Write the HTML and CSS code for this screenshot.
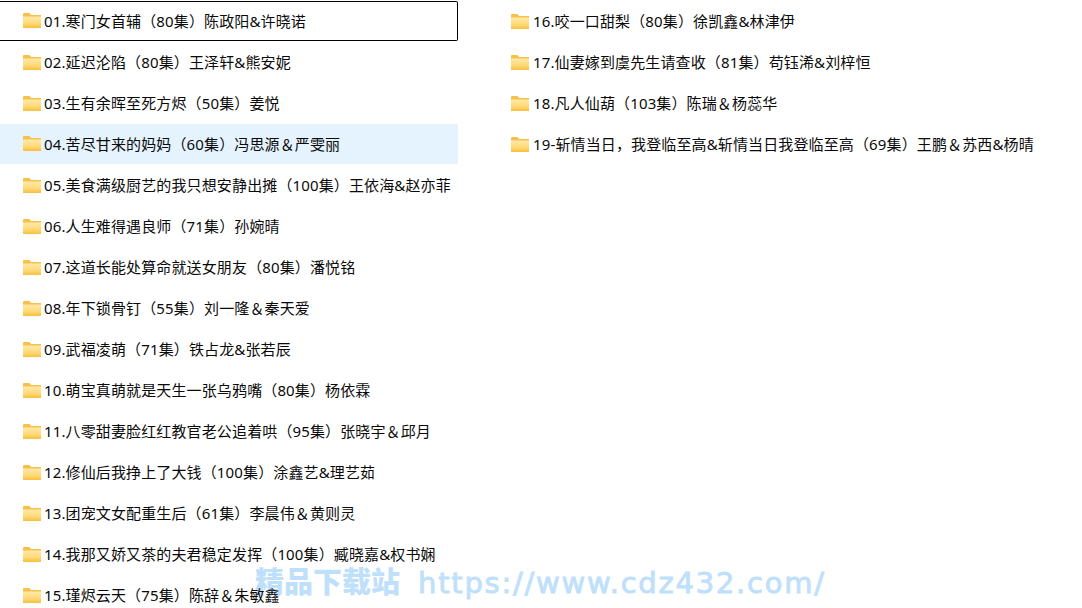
FILE: index.html
```html
<!DOCTYPE html>
<html lang="zh-CN">

<head>
    <meta charset="UTF-8">
    <meta name="viewport" content="width=device-width, initial-scale=1.0">
    <title>文件列表</title>
    <link rel="stylesheet" href="styles.css">
</head>

<body>
    <svg class="defs" width="0" height="0">
        <defs>
            <linearGradient id="folderFill" x1="0" y1="0" x2="0" y2="1">
                <stop offset="0" stop-color="#ffe9a8" />
                <stop offset="0.6" stop-color="#ffd977" />
                <stop offset="1" stop-color="#f9bf3c" />
            </linearGradient>
            <symbol id="folder" viewBox="0 0 18 15">
                <path d="M0 1.2C0 .5.5 0 1.2 0h4.6c.5 0 .9.2 1.2.6L8.2 2H18v12.4c0 .3-.3.6-.6.6H.6c-.3 0-.6-.3-.6-.6z" fill="#f7c04a" />
                <path d="M0 3.6h18V14.4c0 .3-.3.6-.6.6H.6c-.3 0-.6-.3-.6-.6z" fill="url(#folderFill)" />
            </symbol>
        </defs>
    </svg>

    <div class="list">
        <div class="column">
            <div class="item focused"><svg class="folder"><use href="#folder"></use></svg><span>01.寒门女首辅（80集）陈政阳&amp;许晓诺</span></div>
            <div class="item"><svg class="folder"><use href="#folder"></use></svg><span>02.延迟沦陷（80集）王泽轩&amp;熊安妮</span></div>
            <div class="item"><svg class="folder"><use href="#folder"></use></svg><span>03.生有余晖至死方烬（50集）姜悦</span></div>
            <div class="item hover"><svg class="folder"><use href="#folder"></use></svg><span>04.苦尽甘来的妈妈（60集）冯思源＆严雯丽</span></div>
            <div class="item"><svg class="folder"><use href="#folder"></use></svg><span>05.美食满级厨艺的我只想安静出摊（100集）王依海&amp;赵亦菲</span></div>
            <div class="item"><svg class="folder"><use href="#folder"></use></svg><span>06.人生难得遇良师（71集）孙婉晴</span></div>
            <div class="item"><svg class="folder"><use href="#folder"></use></svg><span>07.这道长能处算命就送女朋友（80集）潘悦铭</span></div>
            <div class="item"><svg class="folder"><use href="#folder"></use></svg><span>08.年下锁骨钉（55集）刘一隆＆秦天爱</span></div>
            <div class="item"><svg class="folder"><use href="#folder"></use></svg><span>09.武福凌萌（71集）铁占龙&amp;张若辰</span></div>
            <div class="item"><svg class="folder"><use href="#folder"></use></svg><span>10.萌宝真萌就是天生一张乌鸦嘴（80集）杨依霖</span></div>
            <div class="item"><svg class="folder"><use href="#folder"></use></svg><span>11.八零甜妻脸红红教官老公追着哄（95集）张晓宇＆邱月</span></div>
            <div class="item"><svg class="folder"><use href="#folder"></use></svg><span>12.修仙后我挣上了大钱（100集）涂鑫艺&amp;理艺茹</span></div>
            <div class="item"><svg class="folder"><use href="#folder"></use></svg><span>13.团宠文女配重生后（61集）李晨伟＆黄则灵</span></div>
            <div class="item"><svg class="folder"><use href="#folder"></use></svg><span>14.我那又娇又茶的夫君稳定发挥（100集）臧晓嘉&amp;权书娴</span></div>
            <div class="item"><svg class="folder"><use href="#folder"></use></svg><span>15.瑾烬云天（75集）陈辞＆朱敏鑫</span></div>
        </div>
        <div class="column column-right">
            <div class="item"><svg class="folder"><use href="#folder"></use></svg><span>16.咬一口甜梨（80集）徐凯鑫&amp;林津伊</span></div>
            <div class="item"><svg class="folder"><use href="#folder"></use></svg><span>17.仙妻嫁到虞先生请查收（81集）苟钰浠&amp;刘梓恒</span></div>
            <div class="item"><svg class="folder"><use href="#folder"></use></svg><span>18.凡人仙葫（103集）陈瑞＆杨蕊华</span></div>
            <div class="item"><svg class="folder"><use href="#folder"></use></svg><span>19-斩情当日，我登临至高&amp;斩情当日我登临至高（69集）王鹏＆苏西&amp;杨晴</span></div>
        </div>
    </div>

    <div class="watermark"><span class="wm-cn">精品下载站</span><span class="wm-url">https://www.cdz432.com/</span></div>
</body>

</html>
```

FILE: styles.css
```css
html,
body {
    margin: 0;
    height: 608px;
    overflow: hidden;
    background-color: #fff;
}

body {
    font-family: "Noto Sans", "Noto Sans CJK SC", sans-serif;
    font-size: 15px;
    letter-spacing: 0.13px;
    color: #0a0a0a;
}

.defs {
    position: absolute;
}

.list {
    position: relative;
    z-index: 1;
    display: flex;
    gap: 30px;
    padding-top: 1px;
}

.column {
    width: 458px;
    flex: none;
}

.column-right {
    width: 580px;
}

.item {
    display: flex;
    align-items: center;
    box-sizing: border-box;
    height: 41px;
    padding-left: 23px;
    white-space: nowrap;
}

.item span {
    position: relative;
    top: -1px;
}

.column-right .folder {
    margin-right: 4px;
}

.item.focused {
    height: 40px;
    margin-bottom: 1px;
    border: 1px solid #000;
    border-left: none;
    border-radius: 0 2px 2px 0;
}

.item.hover {
    height: 40px;
    margin-bottom: 1px;
    background-color: #e5f3ff;
    border-radius: 0 2px 2px 0;
}

.folder {
    width: 18px;
    height: 15px;
    margin-right: 3px;
    margin-top: -1px;
    flex: none;
}

.watermark {
    position: absolute;
    left: 255px;
    top: 559px;
    display: flex;
    align-items: baseline;
    gap: 18px;
    font-family: "DejaVu Sans", "Noto Sans CJK SC", sans-serif;
    font-size: 29px;
    letter-spacing: 0;
    white-space: nowrap;
    color: #bfe0fb;
}

.wm-cn {
    font-weight: 900;
}

.wm-url {
    letter-spacing: 1.75px;
    -webkit-text-stroke: 0.9px #bfe0fb;
}
```
